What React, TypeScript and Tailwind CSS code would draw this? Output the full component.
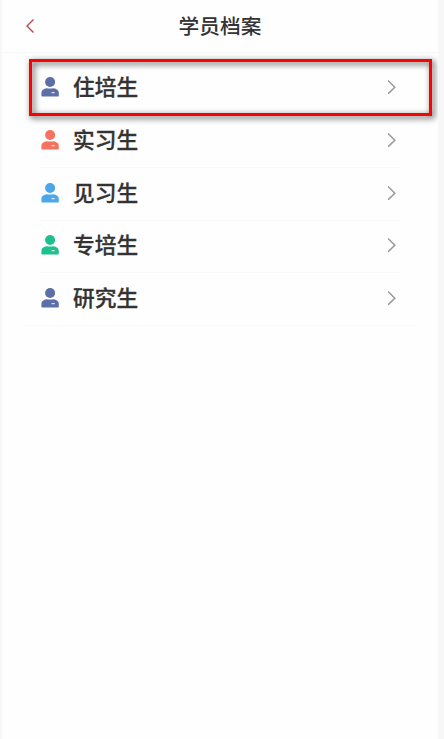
const groups = [
  { name: '住培生', color: 'text-[#5d6fa8]', row: 'h-[53px] border-b pb-0.5' },
  { name: '实习生', color: 'text-[#f4735e]', row: 'h-[53px] border-b pb-0.5' },
  { name: '见习生', color: 'text-[#4ca6ea]', row: 'h-[53px] border-b pb-0.5' },
  { name: '专培生', color: 'text-[#1fc08f]', row: 'h-[52px] border-b pb-[3px]' },
  { name: '研究生', color: 'text-[#5d6fa8]', row: 'h-[53px] -mb-px pb-[3px]' },
];

function PersonIcon({ className }: { className: string }) {
  return (
    <svg viewBox="0 0 18 20" className={`h-5 w-[18px] shrink-0 ${className}`}>
      <circle cx="9.1" cy="5" r="5" fill="currentColor" />
      <path
        d="M0.400 15.400c.2-2.300 2.400-3.400 5.100-4.100q3.600.4 7.200 0c2.700.7 4.900 1.800 5.100 4.100v3.200c0 .6-.4 1-1 1H1.400c-.6 0-1-.4-1-1z"
        fill="currentColor"
      />
      <path d="M11 15.700h2.300" stroke="#fff" strokeWidth="1" strokeLinecap="round" />
    </svg>
  );
}

export default function App() {
  return (
    <div className="h-[739px] w-[444px] overflow-hidden border-l-2 border-r-6 border-[#f7f7f7] bg-[#fefefe] font-['Noto_Sans_CJK_SC','Noto_Sans',sans-serif] text-[#333]">
      {/* Header */}
      <header className="grid h-[53px] grid-cols-[60px_1fr_60px] items-center border-b border-[#f7f7f7]">
        <button className="pl-6">
          <svg viewBox="0 0 8 14" className="h-3.5 w-2 fill-none stroke-[#bd4750] stroke-[1.4]">
            <path d="M7.500 0.500L1 7l6.500 6.500" />
          </svg>
        </button>
        <h1 className="pb-0.5 text-center text-[20.7px] leading-none font-medium">学员档案</h1>
      </header>

      {/* Trainee groups */}
      <main className="relative mr-[23px] ml-[23px] border-b border-[#f9f9f9] pt-[9px]">
        {groups.map((group) => (
          <div
            key={group.name}
            className={`mr-[14px] ml-[15px] flex items-center border-[#f7f7f7] ${group.row}`}
          >
            <PersonIcon className={`ml-px ${group.color}`} />
            <span className="ml-3.5 flex-1 pb-0.5 text-[21.7px] leading-none font-medium [-webkit-text-stroke:0.3px]">
              {group.name}
            </span>
            <svg viewBox="0 0 8 14" className="mr-[5px] h-3.5 w-2 fill-none stroke-[#999] stroke-[1.5]">
              <path d="M0 0.500L6.800 7.200L0 13.900" />
            </svg>
          </div>
        ))}

        {/* Highlight over the first group */}
        <div className="absolute top-1.5 left-1 h-[57px] w-[403px] border-3 border-[#ff0000] drop-shadow-[2px_2px_3px_rgba(0,0,0,0.75)]" />
      </main>
    </div>
  );
}
